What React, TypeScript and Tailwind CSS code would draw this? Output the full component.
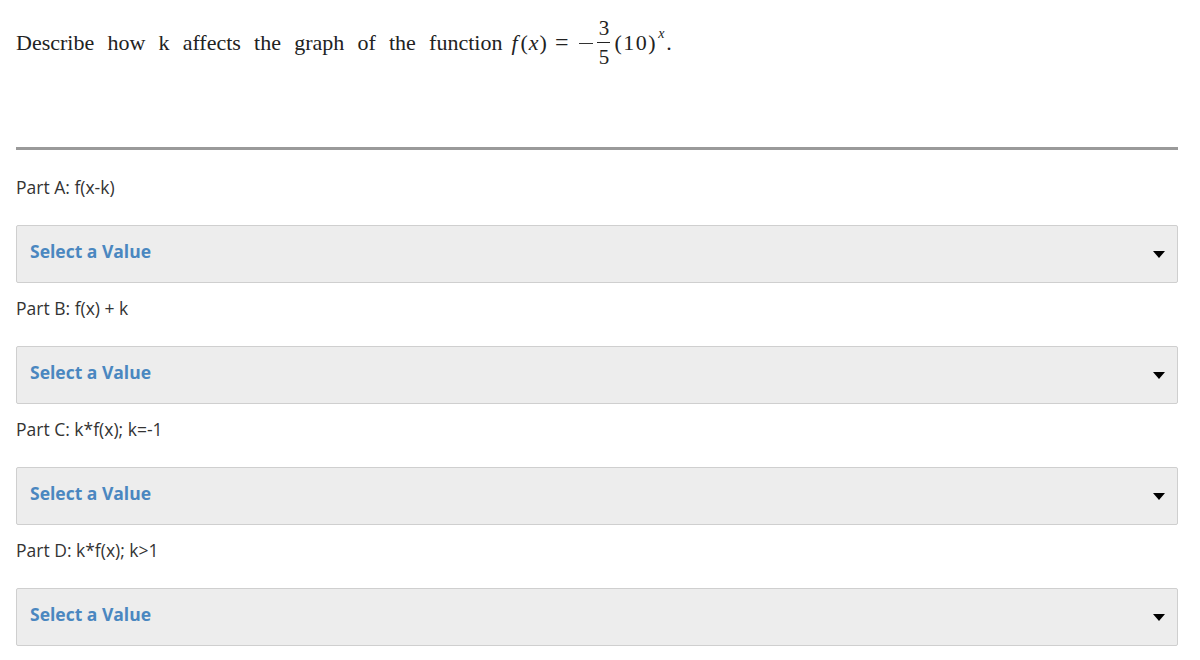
import React from 'react';

const parts = ['Part A: f(x-k)', 'Part B: f(x) + k', 'Part C: k*f(x); k=-1', 'Part D: k*f(x); k>1'];

function Dropdown() {
  return (
    <div className="mt-[27px] h-[58px] flex items-center justify-between bg-[#ededed] border border-[#cfcfcf] rounded-[2px] pl-[13px] pr-[12px]">
      <span className="text-[17.5px] font-bold text-[#4a87c0] mb-[6px]">Select a Value</span>
      <span className="w-0 h-0 border-l-[6px] border-r-[6px] border-t-[7px] border-l-transparent border-r-transparent border-t-black" />
    </div>
  );
}

export default function App() {
  return (
    <div className="bg-white min-h-[660px] pl-4 pt-[18px]" style={{ fontFamily: '"Open Sans", sans-serif' }}>
      <div className="w-[1162px]">
        {/* question */}
        <div
          className="h-[48px] flex items-center text-[22px] text-[#222]"
          style={{ fontFamily: '"Liberation Serif", "DejaVu Serif", serif' }}
        >
          <span className="[word-spacing:0.35em]">Describe how k affects the graph of the function</span>
          <span className="italic ml-[9px] mr-[3px]">f</span>
          <span>(</span>
          <span className="italic mx-[1px]">x</span>
          <span>)</span>
          <span className="ml-[8px] mr-[11px] text-[24px] leading-none">=</span>
          <span className="w-[14px] border-t-[1.5px] border-[#333] mt-[2px]" />
          <span className="inline-flex flex-col items-center ml-[4px] mr-[4px] text-[21px] leading-[24px]">
            <span>3</span>
            <span className="w-[13px] border-t border-[#222] my-[2px]" />
            <span>5</span>
          </span>
          <span className="[letter-spacing:1.5px]">(10)</span>
          <span className="italic text-[14px] self-start mt-[5px] ml-[1px]">x</span>
          <span className="ml-[2px]">.</span>
        </div>

        <div className="mt-[81px] border-t-[3px] border-[#9a9a9a]" />

        <div className="pt-[26px]">
          {parts.map((p, i) => (
            <div key={p} className={i === 0 ? '' : 'mt-[14px]'}>
              <div className="text-[17.5px] leading-[22px] text-[#333]">{p}</div>
              <Dropdown />
            </div>
          ))}
        </div>
      </div>
    </div>
  );
}
